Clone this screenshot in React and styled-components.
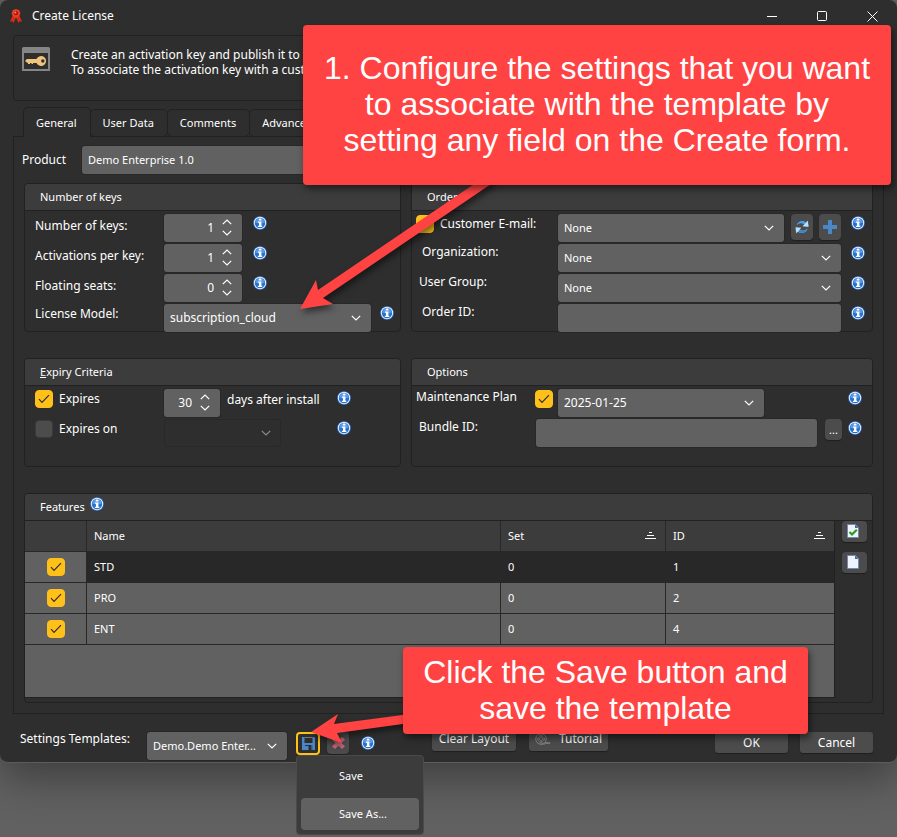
import React from "react";
import styled, { createGlobalStyle, css } from "styled-components";

const c = {
  window: "#2e2e2e",
  head: "#3c3c3c",
  line: "#212121",
  field: "#616161",
  button: "#4c4c4c",
  accent: "#ffc01a",
  text: "#ffffff",
  call: "#ff4343",
};

const GlobalStyle = createGlobalStyle`
  *, *::before, *::after { box-sizing: border-box; }
  body { margin: 0; background: #616161; }
  button, input, select { font: inherit; color: inherit; margin: 0; }
`;

const Page = styled.div`
  position: relative;
  min-height: 100vh;
  overflow: hidden;
  background: #616161;
  color: ${c.text};
  font: 11px/16px "Noto Sans", "Open Sans", sans-serif;
`;

const Window = styled.main`
  display: flex;
  flex-direction: column;
  background: ${c.window};
  border-bottom: 1px solid #5c5c5c;
  border-radius: 8px;
  box-shadow: 0 16px 40px rgba(0, 0, 0, 0.35);
`;

const TitleBar = styled.header`
  display: flex;
  align-items: center;
  height: 32px;
  margin-bottom: 3px;
  padding-left: 9px;
`;
const Title = styled.h1`
  flex: 1;
  margin: 0 0 0 9px;
  font-size: 12px;
  font-weight: 400;
`;
const WindowButton = styled.button`
  display: grid;
  place-items: center;
  width: 50px;
  height: 32px;
  padding: 0;
  border: 0;
  background: none;
`;

const Intro = styled.section`
  display: flex;
  gap: 21px;
  min-height: 66px;
  margin: 0 13px 6px;
  padding: 11px 8px;
  border: 1px solid ${c.line};
  border-radius: 4px;
  font-size: 12px;
  line-height: 15px;
`;
const IntroText = styled.p`
  margin: 0;
`;

const Tabs = styled.div`
  display: flex;
  align-items: flex-end;
  height: 30px;
  padding-left: 23px;
  z-index: 1;
`;
const Tab = styled.button`
  height: 28px;
  padding: 0 13px 0 12px;
  margin-left: -1px;
  border: 1px solid ${c.line};
  border-radius: 5px;
  background: ${c.window};
  ${(p) =>
    p.$active &&
    css`
      height: 30px;
      padding: 0 13px 0 12px;
      margin-left: 0;
      border-bottom: 0;
      border-radius: 5px 5px 0 0;
    `}
`;
const Panel = styled.div`
  display: flex;
  flex-direction: column;
  margin: -1px 13px 0;
  padding: 9px 10px 10px;
  border: 1px solid ${c.line};
`;
const ProductRow = styled.div`
  display: flex;
  align-items: center;
  margin: 0 0 9px -2px;
`;
const Columns = styled.div`
  display: grid;
  grid-template-columns: 377fr 462fr;
  gap: 26px 10px;
  margin-bottom: 26px;
`;

const Group = styled.fieldset`
  display: flex;
  flex-direction: column;
  min-width: 0;
  min-height: ${(p) => p.$min || 0}px;
  margin: 0;
  padding: 0;
  border: 1px solid ${c.line};
  border-radius: 4px;
`;
const GroupHead = styled.div`
  display: flex;
  align-items: center;
  gap: 5px;
  height: 27px;
  padding: 0 15px;
  background: ${c.head};
  border-bottom: 1px solid ${c.line};
  border-radius: 3px 3px 0 0;
  & > button { align-self: flex-start; }
`;
const GroupBody = styled.div`
  display: grid;
  gap: 2px;
  align-content: start;
  margin-bottom: -1px;
  padding-top: 3px;
  padding-left: ${(p) => p.$left || 0}px;
  padding-right: ${(p) => p.$right || 0}px;
`;
const Row = styled.div`
  display: flex;
  align-items: flex-start;
  height: 28px;
`;
const Label = styled.label`
  flex: none;
  display: flex;
  align-items: center;
  gap: 6px;
  width: ${(p) => p.$width}px;
  padding-left: ${(p) => p.$indent || 0}px;
  font-size: 12px;
  line-height: ${(p) => p.$line || 18}px;
`;
const Cell = styled.div`
  display: flex;
  width: 173px;
  gap: 7px;
  font-size: 12px;
  line-height: 22px;
`;
const PlanCell = styled.div`
  display: flex;
  flex: 1;
  gap: 5px;
`;

const InfoButton = styled.button`
  flex: none;
  display: grid;
  place-items: center;
  width: 14px;
  height: ${(p) => p.$height || 18}px;
  padding: 0;
  margin-left: ${(p) => p.$gap || 0}px;
  border: 0;
  background: none;
`;

const fieldLook = css`
  height: 28px;
  border: 0;
  border-radius: 3px;
  background: ${c.field};
  box-shadow: 0 0 0 1px #282828;
`;
const SelectShell = styled.div`
  display: grid;
  align-items: center;
  flex: ${(p) => (p.$width ? "none" : "1")};
  width: ${(p) => (p.$width ? p.$width + "px" : "auto")};
  min-width: 0;
  & > * { grid-area: 1 / 1; }
  & > svg { justify-self: end; margin-right: 10px; pointer-events: none; }
`;
const SelectBox = styled.select`
  ${fieldLook}
  width: 100%;
  padding: 0 30px 0 6px;
  appearance: none;
  font-size: ${(p) => (p.$large ? 12 : 11)}px;
  text-overflow: ellipsis;
  &:disabled {
    background: transparent;
    opacity: 1;
    box-shadow: inset 0 0 0 1px #292929;
    & + svg { opacity: 0.45; }
  }
`;
const TextBox = styled.input`
  ${fieldLook}
  flex: 1;
  min-width: 0;
  padding: 0 6px;
`;
const SpinShell = styled.div`
  ${fieldLook}
  flex: none;
  display: flex;
  width: ${(p) => p.$width}px;
`;
const SpinInput = styled.input`
  flex: 1;
  min-width: 0;
  padding: 0;
  border: 0;
  background: none;
  text-align: right;
  font-size: 12px;
  appearance: textfield;
  &::-webkit-inner-spin-button { appearance: none; }
`;
const SpinButtons = styled.div`
  display: grid;
  align-content: center;
  width: 28px;
  padding: 0 2px 2px 0;
`;
const SpinButton = styled.button`
  display: grid;
  place-items: center;
  height: 11px;
  padding: 0;
  border: 0;
  background: none;
`;

const CheckShell = styled.span`
  display: inline-grid;
  place-items: center;
  flex: none;
  width: 18px;
  height: 18px;
  margin-top: ${(p) => p.$top || 0}px;
  & > * { grid-area: 1 / 1; }
  & > svg { pointer-events: none; }
`;
const CheckInput = styled.input`
  width: 18px;
  height: 18px;
  appearance: none;
  border: 1px solid #3a3a3a;
  border-radius: 4px;
  background: ${c.button};
  &:checked { background: ${c.accent}; border-color: ${c.accent}; }
`;

const ToolButton = styled.button`
  flex: none;
  display: grid;
  place-items: center;
  width: ${(p) => p.$width || 22}px;
  height: ${(p) => p.$height || 22}px;
  margin-left: ${(p) => p.$gap || 0}px;
  padding: 0;
  border: ${(p) => (p.$focus ? `2px solid ${c.accent}` : "0")};
  border-radius: 4px;
  background: ${(p) => (p.$focus ? c.window : c.button)};
  box-shadow: 0 1px 1px #1f1f1f;
`;
const PageButton = styled(ToolButton)`
  padding: 0 3px 1px 0;
`;
const PushButton = styled.button`
  display: flex;
  align-items: center;
  justify-content: center;
  gap: 8px;
  width: ${(p) => p.$width}px;
  height: ${(p) => p.$height || 21}px;
  padding: 0;
  border: 0;
  border-radius: 3px;
  background: ${c.button};
  box-shadow: 0 1px 1px #1f1f1f;
  font-size: 12px;
`;

const FeatureBody = styled.div`
  display: flex;
  gap: 7px;
  padding: 0 5px 4px 0;
`;
const TableArea = styled.div`
  flex: 1;
  min-width: 0;
  min-height: 177px;
  background: ${c.field};
  border-right: 1px solid ${c.line};
  border-bottom: 1px solid ${c.line};
`;
const Table = styled.table`
  width: 100%;
  table-layout: fixed;
  border-collapse: separate;
  border-spacing: 0;
`;
const Col = styled.col`
  width: ${(p) => (p.$width ? p.$width + "px" : "auto")};
`;
const cell = css`
  height: 31px;
  padding: 0 7px;
  text-align: left;
  font-weight: 400;
  border-bottom: 1px solid #282828;
  border-right: 1px solid #282828;
  &:last-child { border-right: 0; }
`;
const Th = styled.th`
  ${cell}
  background: ${c.head};
`;
const ThInner = styled.span`
  display: flex;
  align-items: center;
  justify-content: space-between;
  padding-right: 2px;
`;
const Td = styled.td`
  ${cell}
  background: ${(p) => (p.$selected ? "#282828" : c.field)};
  ${(p) => p.$selected && "border-color: #282828;"}
`;
const TdCheck = styled(Td)`
  text-align: center;
  & > span { vertical-align: middle; }
`;
const Side = styled.div`
  display: flex;
  flex-direction: column;
  gap: 10px;
`;

const Footer = styled.footer`
  display: flex;
  align-items: flex-start;
  padding: 13px 24px 2px 20px;
  min-height: 48px;
`;
const Low = styled.div`
  display: flex;
  align-items: flex-start;
  padding-top: 5px;
  gap: ${(p) => p.$gap || 0}px;
`;
const High = styled.div`
  display: flex;
  flex: 1;
  gap: 13px;
  margin-left: 57px;
`;
const MenuAnchor = styled.div`
  position: relative;
  margin-left: 9px;
`;
const Menu = styled.div`
  position: absolute;
  top: 23px;
  left: 0;
  z-index: 2;
  display: grid;
  gap: 6px;
  width: 128px;
  padding: 4px;
  background: ${c.head};
  border: 1px solid #4a4a4a;
  border-radius: 4px;
`;
const MenuItem = styled.button`
  height: 32px;
  padding: 0 0 0 38px;
  border: 0;
  border-radius: 4px;
  background: ${(p) => (p.$active ? c.field : "transparent")};
  text-align: left;
`;

const Callout = styled.aside`
  position: absolute;
  z-index: 4;
  left: ${(p) => p.$x}px;
  top: ${(p) => p.$y}px;
  width: ${(p) => p.$w}px;
  height: ${(p) => p.$h}px;
  display: grid;
  place-content: center;
  padding-bottom: 2px;
  border-radius: 4px;
  background: ${c.call};
  box-shadow: 2px 4px 7px rgba(0, 0, 0, 0.5);
  color: #fff;
  font: 32px/36px "Liberation Sans", Arial, sans-serif;
  text-align: center;
  white-space: pre-line;
`;
const Arrow = styled.svg`
  position: absolute;
  z-index: 3;
  left: 0;
  top: 0;
  pointer-events: none;
  filter: drop-shadow(2px 4px 3px rgba(0, 0, 0, 0.5));
`;

const Chevron = ({ up }) => (
  <svg width="10" height="6" viewBox="0 0 10 6" fill="none" stroke="#fff" strokeWidth="1.2">
    <path d={up ? "M.8 5.2 5 1l4.2 4.2" : "M.8.8 5 5 9.2.8"} />
  </svg>
);

const InfoIcon = () => (
  <svg width="14" height="14" viewBox="0 0 14 14">
    <circle cx="7" cy="7" r="7" fill="#2a62b4" />
    <circle cx="7" cy="7" r="6.2" fill="#e8f1fc" />
    <circle cx="7" cy="7" r="5.2" fill="#2472d0" />
    <path d="M2.2 6.4a4.9 4.9 0 0 1 9.6 0Q7 8.4 2.2 6.4" fill="#5c9ae4" />
    <path d="M5.800 2.600h2.600v2H5.800zM5 5.600h3.400v4.200h.9V11H4.900V9.800h1.100V6.800H5z" fill="#fff" />
  </svg>
);
const RosetteIcon = () => (
  <svg width="14" height="14" viewBox="0 0 14 14">
    <path d="M4 6 1 12.600l2.200-.4L4.500 14 7 8.500 9.500 14l1.300-1.800 2.200.4L10 6z" fill="#d92c18" />
    <path d="M7 0 8.500.8l1.700.2.4 1.700L11.500 4.200l-.9 1.500-.4 1.600-1.700.3L7 8.500l-1.500-.9-1.700-.3-.4-1.600-.9-1.500.9-1.500L3.800 1 5.500.8z" fill="#f0452a" />
    <circle cx="7" cy="4.200" r="2.400" fill="#b81808" />
    <circle cx="6.300" cy="3.500" r="1" fill="#ff8a60" />
  </svg>
);
const KeyWindowIcon = () => (
  <svg width="28" height="24" viewBox="0 0 28 24">
    <path d="M0 1.500A1.500 1.500 0 0 1 1.500 0h25A1.500 1.500 0 0 1 28 1.500V24H0z" fill="#858585" />
    <path d="M2 6h24v16H2z" fill="#2e2e2e" />
    <path d="M3.500 13.200 5 12h9.500a5 5 0 1 1 0 4H11v1H9.500v-1H8v1H6v-1L3.500 14.800z" fill="#efc47c" />
    <circle cx="20.800" cy="14" r="1.700" fill="#2e2e2e" />
  </svg>
);
const CheckMark = () => (
  <svg width="12" height="10" viewBox="0 0 12 10" fill="none" stroke="#2e2e2e" strokeWidth="1.200">
    <path d="M1 5.200 4 8.300 11 1.200" />
  </svg>
);
const SortIcon = () => (
  <svg width="11" height="8" viewBox="0 0 11 8" fill="#fff">
    <path d="M4 0h3v1H4zM2 3h7v1H2zM0 6h11v1H0z" />
  </svg>
);
const RefreshIcon = () => (
  <svg width="14" height="14" viewBox="0 0 14 14">
    <path d="M1.500 5.500C2.500 1.500 7.500-.5 10.700 2.600L12.800.8l.7 5.900-5.800-.5 1.500-1.600C6.700 2.200 4 3 1.500 5.500z" fill="#49a3f0" />
    <path d="M12.500 8.500c-1 4-6 6-9.200 2.900L1.200 13.200.5 7.300l5.800.5-1.500 1.600c2.500 2.400 5.200 1.600 7.700-.9z" fill="#b9e0fc" />
    <path d="M12.500 8.500c-1 4-6 6-9.200 2.900l1.500-2c2.500 2.400 5.200 1.600 7.700-.9z" fill="#2f86dd" />
    <path d="m12.800.8.7 5.900-5.800-.5z" fill="#b9e0fc" />
  </svg>
);
const PlusIcon = () => (
  <svg width="14" height="14" viewBox="0 0 14 14">
    <path d="M5 0h4v5h5v4H9v5H5V9H0V5h5z" fill="#4a87c6" />
  </svg>
);
const PageIcon = ({ checked }) => (
  <svg width="12" height="14" viewBox="0 0 12 14">
    <path d="M.5.5h8l3 3v10H.5z" fill="#edf4fd" stroke="#7488b0" />
    <path d="M8 .5v3.500h3.500z" fill="#4d6496" />
    {checked && <path d="m2.500 8 2.500 2.500 4.800-4.800" fill="none" stroke="#279b1c" strokeWidth="2.200" />}
  </svg>
);
const FloppyIcon = () => (
  <svg width="13" height="13" viewBox="0 0 13 13">
    <path d="M0 0h12l1 1v12H0z" fill="#4a87c6" />
    <path d="M2.500 0h8v6h-8z" fill="#2e2e2e" />
    <path d="M2.500 0h8v1h-8z" fill="#777" />
    <path d="M3 8h7.500v5H3z" fill="#2e2e2e" />
    <path d="M3 9h3.500v4H3zM9.500 8h1v5h-1z" fill="#4a87c6" />
  </svg>
);
const DeleteIcon = () => (
  <svg width="13" height="12" viewBox="0 0 13 12">
    <path d="M3 0 6.500 3.300 10 0l3 2.700L9.500 6 13 9.300 10 12 6.500 8.700 3 12 0 9.300 3.500 6 0 2.700z" fill="#c86a7c" />
  </svg>
);
const ReelIcon = () => (
  <svg width="16" height="12" viewBox="0 0 16 12" fill="none" stroke="#858585">
    <circle cx="6" cy="6" r="5.300" />
    <circle cx="6" cy="3.200" r="1.200" />
    <circle cx="3.300" cy="6" r="1.200" />
    <circle cx="8.700" cy="6" r="1.200" />
    <circle cx="6" cy="8.800" r="1.200" />
    <path d="M7 11h3l1-2 1 2 1-2 1 2 1-2" />
  </svg>
);

const Info = ({ label, gap, height }) => (
  <InfoButton type="button" aria-label={`About ${label}`} $gap={gap} $height={height}>
    <InfoIcon />
  </InfoButton>
);
const Select = ({ id, value, width, disabled, label, large }) => (
  <SelectShell $width={width}>
    <SelectBox id={id} disabled={disabled} aria-label={label} $large={large}>
      <option>{value}</option>
    </SelectBox>
    <Chevron />
  </SelectShell>
);
const Spin = ({ id, value, width = 78, label }) => (
  <SpinShell $width={width}>
    <SpinInput id={id} type="number" defaultValue={value} aria-label={label} />
    <SpinButtons>
      <SpinButton type="button" aria-label="Increase"><Chevron up /></SpinButton>
      <SpinButton type="button" aria-label="Decrease"><Chevron /></SpinButton>
    </SpinButtons>
  </SpinShell>
);
const Check = ({ id, checked = true, label, top }) => (
  <CheckShell $top={top}>
    <CheckInput id={id} type="checkbox" defaultChecked={checked} aria-label={label} />
    {checked && <CheckMark />}
  </CheckShell>
);

const counts = [
  ["keys", "Number of keys:", 1],
  ["activations", "Activations per key:", 1],
  ["seats", "Floating seats:", 0],
];
const features = [
  ["STD", 0, 1],
  ["PRO", 0, 2],
  ["ENT", 0, 4],
];

export default function App() {
  return (
    <Page>
      <GlobalStyle />
      <Window>
        <TitleBar>
          <RosetteIcon />
          <Title>Create License</Title>
          <WindowButton aria-label="Minimize">
            <svg width="10" height="10"><path d="M0 5.500h10" stroke="#fff" /></svg>
          </WindowButton>
          <WindowButton aria-label="Maximize">
            <svg width="10" height="10"><rect x=".5" y=".5" width="9" height="9" rx="1" fill="none" stroke="#fff" /></svg>
          </WindowButton>
          <WindowButton aria-label="Close">
            <svg width="11" height="11"><path d="m.5.5 10 10m0-10-10 10" stroke="#fff" /></svg>
          </WindowButton>
        </TitleBar>

        <Intro>
          <KeyWindowIcon />
          <IntroText>
            Create an activation key and publish it to the
            <br />
            To associate the activation key with a customer
          </IntroText>
        </Intro>

        <Tabs role="tablist">
          <Tab role="tab" aria-selected="true" $active>General</Tab>
          <Tab role="tab">User Data</Tab>
          <Tab role="tab">Comments</Tab>
          <Tab role="tab">Advanced</Tab>
        </Tabs>

        <Panel>
          <ProductRow>
            <Label htmlFor="product" $width={60}>Product</Label>
            <Select id="product" value="Demo Enterprise 1.0" />
          </ProductRow>

          <Columns>
            <Group aria-label="Number of keys">
              <GroupHead>Number of keys</GroupHead>
              <GroupBody $left={10} $right={6}>
                {counts.map(([id, text, value]) => (
                  <Row key={id}>
                    <Label htmlFor={id} $width={129} $line={24}>{text}</Label>
                    <Spin id={id} value={value} />
                    <Info label={text} gap={11} />
                  </Row>
                ))}
                <Row>
                  <Label htmlFor="model" $width={129} $line={20}>License Model:</Label>
                  <Select id="model" value="subscription_cloud" large />
                  <Info label="License Model" gap={9} />
                </Row>
              </GroupBody>
            </Group>

            <Group aria-label="Order">
              <GroupHead>Order</GroupHead>
              <GroupBody $right={7}>
                <Row>
                  <Label htmlFor="useEmail" $width={146} $indent={4} $line={20}>
                    <Check id="useEmail" />
                    Customer E-mail:
                  </Label>
                  <Select value="None" label="Customer E-mail" />
                  <ToolButton type="button" aria-label="Refresh" $height={26} $gap={7}><RefreshIcon /></ToolButton>
                  <ToolButton type="button" aria-label="Add" $height={26} $gap={6}><PlusIcon /></ToolButton>
                  <Info label="Customer E-mail" gap={10} />
                </Row>
                <Row>
                  <Label htmlFor="org" $width={146} $indent={10} $line={16}>Organization:</Label>
                  <Select id="org" value="None" />
                  <Info label="Organization" gap={10} />
                </Row>
                <Row>
                  <Label htmlFor="ugroup" $width={146} $indent={7} $line={16}>User Group:</Label>
                  <Select id="ugroup" value="None" />
                  <Info label="User Group" gap={10} />
                </Row>
                <Row>
                  <Label htmlFor="order" $width={146} $indent={10} $line={16}>Order ID:</Label>
                  <TextBox id="order" />
                  <Info label="Order ID" gap={10} />
                </Row>
              </GroupBody>
            </Group>

            <Group aria-label="Expiry Criteria" $min={109}>
              <GroupHead><span><u>E</u>xpiry Criteria</span></GroupHead>
              <GroupBody $left={10}>
                <Row>
                  <Label htmlFor="expires" $width={129} $line={20}>
                    <Check id="expires" />
                    Expires
                  </Label>
                  <Cell>
                    <Spin value={30} width={56} label="Days after install" />
                    days after install
                  </Cell>
                  <Info label="Expires" />
                </Row>
                <Row>
                  <Label htmlFor="expiresOn" $width={129} $line={20}>
                    <Check id="expiresOn" checked={false} />
                    Expires on
                  </Label>
                  <Cell>
                    <Select width={117} value="" label="Expiry date" disabled />
                  </Cell>
                  <Info label="Expires on" />
                </Row>
              </GroupBody>
            </Group>

            <Group aria-label="Options" $min={109}>
              <GroupHead>Options</GroupHead>
              <GroupBody $right={10}>
                <Row>
                  <Label htmlFor="plan" $width={123} $indent={4} $line={16}>Maintenance Plan</Label>
                  <PlanCell>
                    <Check id="plan" top={1} />
                    <Select width={206} value="2025-01-25" label="Maintenance end date" large />
                  </PlanCell>
                  <Info label="Maintenance Plan" />
                </Row>
                <Row>
                  <Label htmlFor="bundle" $width={124} $indent={7} $line={16}>Bundle ID:</Label>
                  <TextBox id="bundle" />
                  <ToolButton type="button" aria-label="Browse bundles" $width={17} $height={21} $gap={8}>...</ToolButton>
                  <Info label="Bundle ID" gap={6} />
                </Row>
              </GroupBody>
            </Group>
          </Columns>

          <Group aria-label="Features">
            <GroupHead>
              Features
              <Info label="Features" height={20} />
            </GroupHead>
            <FeatureBody>
              <TableArea>
                <Table>
                  <colgroup>
                    <Col $width={62} />
                    <Col />
                    <Col $width={165} />
                    <Col $width={168} />
                  </colgroup>
                  <thead>
                    <tr>
                      <Th aria-label="Enabled" />
                      <Th>Name</Th>
                      <Th><ThInner>Set<SortIcon /></ThInner></Th>
                      <Th><ThInner>ID<SortIcon /></ThInner></Th>
                    </tr>
                  </thead>
                  <tbody>
                    {features.map(([name, set, id], i) => (
                      <tr key={name}>
                        <TdCheck><Check label={name} /></TdCheck>
                        <Td $selected={i === 0}>{name}</Td>
                        <Td $selected={i === 0}>{set}</Td>
                        <Td $selected={i === 0}>{id}</Td>
                      </tr>
                    ))}
                  </tbody>
                </Table>
              </TableArea>
              <Side>
                <PageButton type="button" aria-label="Select all" $width={25} $height={21}><PageIcon checked /></PageButton>
                <PageButton type="button" aria-label="Select none" $width={25} $height={21}><PageIcon /></PageButton>
              </Side>
            </FeatureBody>
          </Group>
        </Panel>

        <Footer>
          <Label htmlFor="template" $width={127} $line={24}>Settings Templates:</Label>
          <Low>
            <Select id="template" width={140} value="Demo.Demo Enter..." />
            <MenuAnchor>
              <ToolButton type="button" aria-label="Save template" $width={24} $height={23} $focus><FloppyIcon /></ToolButton>
              <Menu role="menu">
                <MenuItem role="menuitem">Save</MenuItem>
                <MenuItem role="menuitem" $active>Save As...</MenuItem>
              </Menu>
            </MenuAnchor>
            <ToolButton type="button" aria-label="Delete template" $gap={7}><DeleteIcon /></ToolButton>
            <Info label="Settings Templates" gap={12} height={22} />
          </Low>
          <High>
            <PushButton type="button" $width={84} $height={24}>Clear Layout</PushButton>
            <PushButton type="button" $width={79} $height={24}><ReelIcon />Tutorial</PushButton>
          </High>
          <Low $gap={12}>
            <PushButton type="button" $width={73}>OK</PushButton>
            <PushButton type="button" $width={73}>Cancel</PushButton>
          </Low>
        </Footer>
      </Window>

      <Arrow width="500" height="760" viewBox="0 0 500 760" fill={c.call} aria-hidden="true">
        <path d="M480 180 318 290l-2-10-16 29 33-5-10-6L497 180z" />
        <path d="M410 714 334 724l4-10-27 18 31 11-5-10 73-10z" />
      </Arrow>
      <Callout $x={303} $y={25} $w={588} $h={160}>
        {"1. Configure the settings that you want\nto associate with the template by\nsetting any field on the Create form."}
      </Callout>
      <Callout $x={403} $y={647} $w={405} $h={87}>
        {"Click the Save button and\nsave the template"}
      </Callout>
    </Page>
  );
}
